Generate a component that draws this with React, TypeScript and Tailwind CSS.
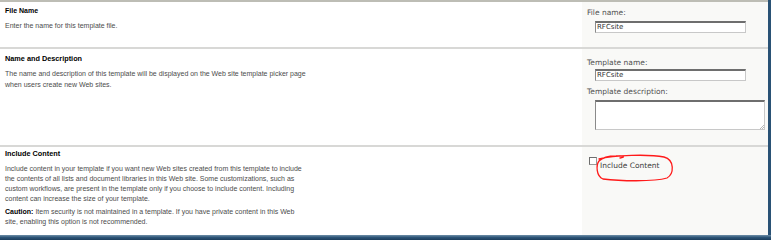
import React from "react";

const body = { fontFamily: '"Liberation Sans", Arial, sans-serif' };
const lab = { fontFamily: '"DejaVu Sans", Verdana, sans-serif' };

export default function App() {
  return (
    <div className="w-[771px] h-[240px] overflow-hidden bg-white flex flex-col" style={body}>
      <div className="flex flex-1 min-h-0">
        <div className="flex-1 flex flex-col">
          <div className="h-[2px] bg-[#bdbdb5]" />
          {/* Section 1 */}
          <div className="flex h-[45px]">
            <div className="w-[582px] pl-[5px] pt-[4px] text-[7px] leading-[9px] text-[#4c4c4c]">
              <div className="font-bold text-black text-[7px]">File Name</div>
              <div className="mt-[6px]">Enter the name for this template file.</div>
            </div>
            <div className="flex-1 bg-[#f9f9f7] pl-[5px] pt-[6px]" style={lab}>
              <div className="text-[7.5px] leading-[10px] text-[#505050]">File name:</div>
              <div className="ml-[8px] mt-[3px] w-[151px] h-[12px] bg-white border border-[#c8c8c8] border-t-[2px] border-t-[#6e6e6e] border-l-[#8a8a8a] flex items-center pl-[1px] text-[7px] text-[#333]">RFCsite</div>
            </div>
          </div>
          <div className="h-[2px] bg-[#d8d8d6]" />
          {/* Section 2 */}
          <div className="flex h-[96px]">
            <div className="w-[582px] pl-[5px] pt-[4px] text-[7px] leading-[11px] text-[#4c4c4c]">
              <div className="font-bold text-black text-[7.3px]">Name and Description</div>
              <div className="mt-[4px] w-[308px]">The name and description of this template will be displayed on the Web site template picker page when users create new Web sites.</div>
            </div>
            <div className="flex-1 bg-[#f9f9f7] pl-[5px] pt-[9px]" style={lab}>
              <div className="text-[7.5px] leading-[10px] text-[#505050]">Template name:</div>
              <div className="ml-[8px] mt-[1px] w-[151px] h-[12px] bg-white border border-[#c8c8c8] border-t-[2px] border-t-[#6e6e6e] border-l-[#8a8a8a] flex items-center pl-[1px] text-[7px] text-[#333]">RFCsite</div>
              <div className="mt-[6px] text-[7.5px] leading-[10px] text-[#505050]">Template description:</div>
              <div className="ml-[8px] mt-[3px] w-[170px] h-[30px] bg-white border border-[#c8c8c8] border-t-[2px] border-t-[#6e6e6e] border-l-[#8a8a8a] relative">
                <svg className="absolute right-0 bottom-0" width="5" height="5" viewBox="0 0 5 5">
                  <path d="M5 1 L1 5 M5 3 L3 5" stroke="#999" strokeWidth="0.7" />
                </svg>
              </div>
            </div>
          </div>
          <div className="h-[2px] bg-[#d8d8d6]" />
          {/* Section 3 */}
          <div className="flex flex-1">
            <div className="w-[582px] pl-[5px] pt-[2px] text-[7px] leading-[10px] text-[#4c4c4c]">
              <div className="font-bold text-black text-[7.3px]">Include Content</div>
              <div className="mt-[5px] w-[306px]">Include content in your template if you want new Web sites created from this template to include the contents of all lists and document libraries in this Web site. Some customizations, such as custom workflows, are present in the template only if you choose to include content. Including content can increase the size of your template.</div>
              <div className="mt-[3px] w-[296px]"><span className="font-bold text-black mr-[2px]">Caution:</span>Item security is not maintained in a template. If you have private content in this Web site, enabling this option is not recommended.</div>
            </div>
            <div className="flex-1 bg-[#f9f9f7] pl-[7px] pt-[10px] relative" style={lab}>
              <div className="flex items-start">
                <div className="w-[8px] h-[8px] border border-[#9a9a9a] border-t-[#6e6e6e] border-l-[#6e6e6e] bg-white" />
                <div className="ml-[3px] mt-[4px] text-[7.5px] leading-[10px] text-[#3c3c3c]">Include Content</div>
              </div>
              <svg className="absolute left-[12px] top-[5px]" width="82" height="30" viewBox="0 0 82 30">
                <path d="M5 7 C20 3, 55 2, 70 5 C81 8, 80 22, 73 26 C60 30, 25 29, 9 27 C2 24, 2 13, 5 9 C8 6, 14 4, 22 4 C30 3.5, 32 5, 26 6"
                  fill="none" stroke="#ff1a1a" strokeWidth="1.3" strokeLinecap="round" />
              </svg>
            </div>
          </div>
        </div>
        <div className="w-[3px] bg-[#2a5275]" />
      </div>
      <div className="h-[5px] bg-gradient-to-b from-[#6f8fa8] via-[#2c5476] to-[#1c3d5c]" />
    </div>
  );
}
